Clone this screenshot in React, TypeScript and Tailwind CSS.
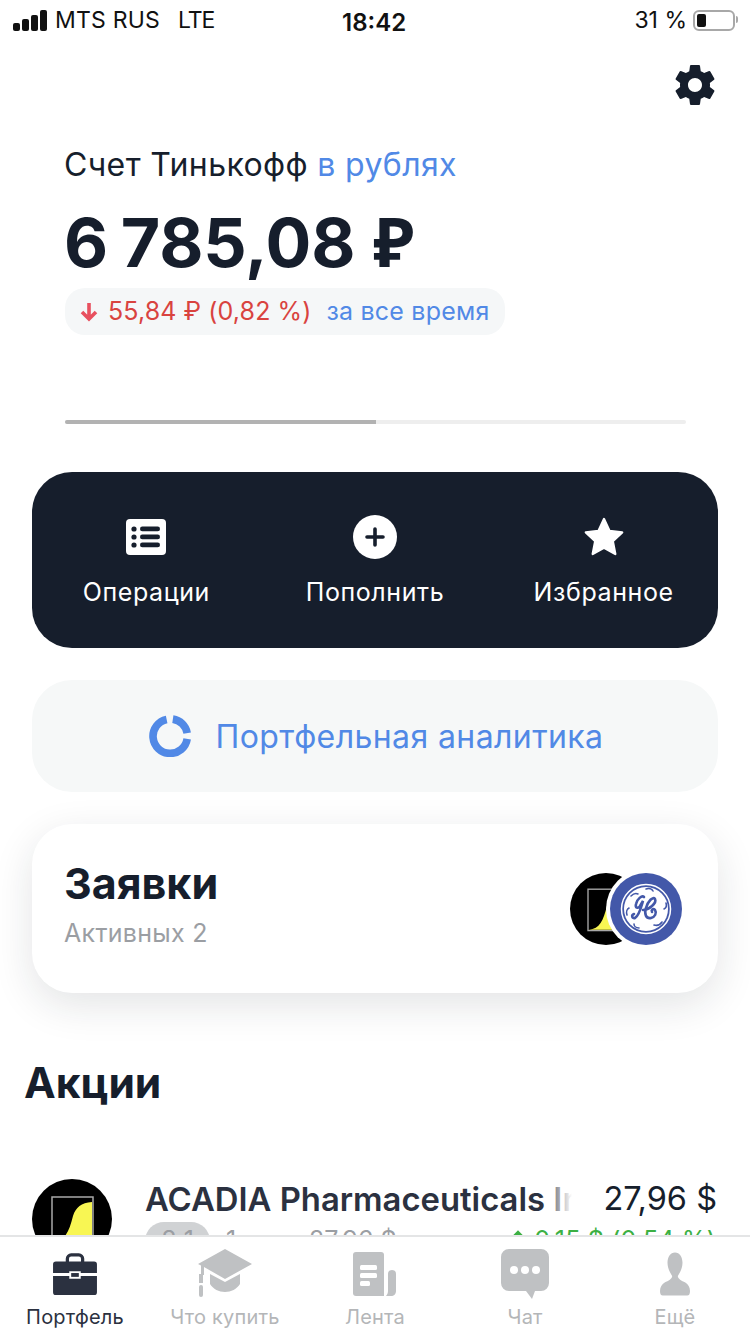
import React from "react";

const font = { fontFamily: "Inter, 'Noto Sans', sans-serif" };

function SignalBars() {
  return (
    <div className="flex items-end gap-[2px]">
      <span className="block w-[7px] h-[8px] rounded-[2px] bg-[#111]" />
      <span className="block w-[7px] h-[12px] rounded-[2px] bg-[#111]" />
      <span className="block w-[7px] h-[16px] rounded-[2px] bg-[#111]" />
      <span className="block w-[7px] h-[21px] rounded-[2px] bg-[#111]" />
    </div>
  );
}

function StatusBar() {
  return (
    <div className="relative flex h-[40px] items-center justify-between pl-[13px] pr-[15px] text-[#111]">
      <div className="flex items-center gap-[8px] text-[23px] tracking-[0.2px]">
        <SignalBars />
        <span>MTS RUS</span>
        <span className="ml-[10px] tracking-[-1px]">LTE</span>
      </div>
      <span className="absolute left-[342px] top-[5px] text-[24px] font-semibold">18:42</span>
      <div className="flex items-center gap-[6px] text-[23px]">
        <span>31 %</span>
        <div className="relative flex h-[21px] w-[42px] items-center rounded-[6px] border-[2px] border-[#a8a8a8] pl-[2px]">
          <span className="block h-[13px] w-[9px] rounded-[2px] bg-[#111]" />
          <span className="absolute right-[-5px] top-[4px] h-[7px] w-[2px] rounded-r bg-[#a8a8a8]" />
        </div>
      </div>
    </div>
  );
}

function Gear() {
  return (
    <svg width="48" height="48" viewBox="0 0 24 24" fill="#161e2c">
      <path d="M19.43 12.98c.04-.32.07-.64.07-.98s-.03-.66-.07-.98l2.11-1.65c.19-.15.24-.42.12-.64l-2-3.46c-.12-.22-.39-.3-.61-.22l-2.49 1c-.52-.4-1.08-.73-1.69-.98l-.38-2.65C14.46 2.18 14.25 2 14 2h-4c-.25 0-.46.18-.49.42l-.38 2.65c-.61.25-1.17.59-1.69.98l-2.49-1c-.23-.09-.49 0-.61.22l-2 3.46c-.13.22-.07.49.12.64l2.11 1.65c-.04.32-.07.65-.07.98s.03.66.07.98l-2.11 1.65c-.19.15-.24.42-.12.64l2 3.46c.12.22.39.3.61.22l2.49-1c.52.4 1.08.73 1.69.98l.38 2.65c.03.24.24.42.49.42h4c.25 0 .46-.18.49-.42l.38-2.65c.61-.25 1.17-.59 1.69-.98l2.49 1c.23.09.49 0 .61-.22l2-3.46c.12-.22.07-.49-.12-.64l-2.11-1.65zM12 15.5c-1.93 0-3.5-1.57-3.5-3.5s1.57-3.5 3.5-3.5 3.5 1.57 3.5 3.5-1.57 3.5-3.5 3.5z" />
    </svg>
  );
}

function ListIcon() {
  return (
    <svg width="40" height="36" viewBox="0 0 40 36">
      <rect width="40" height="36" rx="4" fill="#fff" />
      <g fill="#161e2c">
        <circle cx="8" cy="10" r="2.6" />
        <circle cx="8" cy="18" r="2.6" />
        <circle cx="8" cy="26" r="2.6" />
        <rect x="14" y="7.6" width="20" height="4.6" rx="2.3" />
        <rect x="14" y="15.6" width="20" height="4.6" rx="2.3" />
        <rect x="14" y="23.6" width="20" height="4.6" rx="2.3" />
      </g>
    </svg>
  );
}

function PlusIcon() {
  return (
    <svg width="44" height="44" viewBox="0 0 44 44">
      <circle cx="22" cy="22" r="22" fill="#fff" />
      <path d="M22 14v16M14 22h16" stroke="#161e2c" strokeWidth="3.6" strokeLinecap="round" />
    </svg>
  );
}

function StarIcon() {
  return (
    <svg width="46" height="46" viewBox="0 0 24 24" fill="#fff" stroke="#fff" strokeWidth="1.2" strokeLinejoin="round">
      <path d="M12 2.6l2.9 6.2 6.6.8-4.9 4.6 1.3 6.7L12 17.6l-5.9 3.3 1.3-6.7-4.9-4.6 6.6-.8z" />
    </svg>
  );
}

function ActionButton({ icon, label }: { icon: React.ReactNode; label: string }) {
  return (
    <div className="flex flex-1 flex-col items-center">
      <div className="flex h-[44px] items-center">{icon}</div>
      <span className="mt-[18px] text-[25px] leading-[30px] tracking-[0.6px] text-white">{label}</span>
    </div>
  );
}

function DonutIcon() {
  return (
    <svg width="42" height="42" viewBox="0 0 44 44" fill="none" stroke="#5189e6" strokeWidth="8">
      <path d="M18.5 4.6A18 18 0 1 0 40 25" />
      <path d="M25 4.3A18 18 0 0 1 40 19" />
    </svg>
  );
}

function AcadiaLogo({ size }: { size: number }) {
  return (
    <svg width={size} height={size} viewBox="0 0 80 80" className="shrink-0">
      <circle cx="40" cy="40" r="40" fill="#000" />
      <rect x="20" y="18" width="41" height="46" fill="none" stroke="#a9a9a9" strokeWidth="1.5" />
      <path d="M21 63c12-1 16-10 20-26 3-9 8-13 19-14v40z" fill="#f8f653" />
    </svg>
  );
}

function GeLogo() {
  return (
    <svg width="72" height="72" viewBox="0 0 72 72">
      <circle cx="36" cy="36" r="36" fill="#4358a9" />
      <circle cx="36" cy="36" r="24.5" fill="none" stroke="#fff" strokeWidth="1.5" />
      <circle cx="36" cy="36" r="22" fill="#fff" />
      <g fill="none" stroke="#4358a9" strokeLinecap="round">
        <path strokeWidth="2.6" d="M34 24c-2-2-7 2-8 7-1 4 2 5 4 2l3-5c-2 7-4 15-8 17-3 1-4-3-1-4" />
        <path strokeWidth="2.6" d="M33 37c6 0 14-7 12-11-2-3-7 2-9 9-2 6 0 11 5 10 4-1 6-5 4-8-2-2-4 0-3 2" />
        <path strokeWidth="1.6" d="M36 16c3-1 6 0 7 2M56 30c1 3 0 5-2 6M52 49c-2 3-5 4-8 3M29 55c-3 0-5-2-5-4M17 42c-1-3 0-6 2-7M21 23c2-2 5-3 7-2" />
      </g>
    </svg>
  );
}

function BriefcaseIcon({ color }: { color: string }) {
  return (
    <svg width="44" height="42" viewBox="0 0 46 44">
      <path d="M15 10V6a4 4 0 0 1 4-4h8a4 4 0 0 1 4 4v4" fill="none" stroke={color} strokeWidth="3.4" />
      <path d="M3 9h40a3 3 0 0 1 3 3v9H29v-2H17v2H0v-9a3 3 0 0 1 3-3z" fill={color} />
      <path d="M0 24h17v3h12v-3h17v17a3 3 0 0 1-3 3H3a3 3 0 0 1-3-3z" fill={color} />
      <rect x="19" y="21" width="8" height="4" fill={color} />
    </svg>
  );
}

function CapIcon({ color }: { color: string }) {
  return (
    <svg width="54" height="50" viewBox="0 0 54 50" fill={color}>
      <path d="M27 0l27 15-27 15L6 18v8H3v-9.500L0 15z" />
      <path d="M12 25l15 8 15-8v10c-3 5-9 8-15 8s-12-3-15-8z" />
      <rect x="1" y="36" width="4" height="12" rx="2" />
      <rect x="1" y="25" width="4" height="9" />
    </svg>
  );
}

function FeedIcon({ color }: { color: string }) {
  return (
    <svg width="44" height="44" viewBox="0 0 44 44">
      <path d="M3 0h25a3 3 0 0 1 3 3v41H3a3 3 0 0 1-3-3V3a3 3 0 0 1 3-3z" fill={color} />
      <path d="M33 44h5c3 0 5-2 5-5V22a4 4 0 0 0-8 0v17c0 2-1 4-2 5z" fill={color} />
      <rect x="7" y="13" width="17" height="5" rx="1.500" fill="#fff" />
      <rect x="7" y="21" width="17" height="5" rx="1.500" fill="#fff" />
      <rect x="7" y="29" width="10" height="5" rx="1.500" fill="#fff" />
    </svg>
  );
}

function ChatIcon({ color }: { color: string }) {
  return (
    <svg width="48" height="50" viewBox="0 0 48 50">
      <path d="M8 0h32a8 8 0 0 1 8 8v26a8 8 0 0 1-8 8h-6l-3 8-6-8H8a8 8 0 0 1-8-8V8a8 8 0 0 1 8-8z" fill={color} />
      <circle cx="13" cy="21" r="4" fill="#fff" />
      <circle cx="24" cy="21" r="4" fill="#fff" />
      <circle cx="35" cy="21" r="4" fill="#fff" />
    </svg>
  );
}

function PersonIcon({ color }: { color: string }) {
  return (
    <svg width="30" height="44" viewBox="0 0 32 46" fill={color}>
      <path d="M16 0c5 0 8 5 8 11 0 6-3 11-5 14 0 3 4 5 8 7 3 2 5 5 5 9 0 3-1 5-3 5H3c-2 0-3-2-3-5 0-4 2-7 5-9 4-2 8-4 8-7-2-3-5-8-5-14C8 5 11 0 16 0z" />
    </svg>
  );
}

function TabItem({ icon, label, active }: { icon: React.ReactNode; label: string; active?: boolean }) {
  return (
    <div className="flex flex-1 flex-col items-center">
      <div className="flex h-[52px] items-center">{icon}</div>
      <span className={`mt-[5px] text-[20px] leading-[24px] tracking-[0.2px] ${active ? "text-[#2b3140]" : "text-[#b4b6b8]"}`}>
        {label}
      </span>
    </div>
  );
}

export default function App() {
  const inactive = "#bfc1c3";
  return (
    <div className="flex h-[1334px] w-[750px] flex-col overflow-hidden bg-white" style={font}>
      <StatusBar />
      <div className="min-h-0 flex-1 overflow-hidden">
        <div className="flex justify-end pr-[31px] pt-[21px]">
          <Gear />
        </div>

        <div className="px-[65px]">
          <div className="-ml-[1px] mt-[36px] text-[32px] leading-[40px] tracking-[0.38px] text-[#161e2c]">
            Счет Тинькофф <span className="text-[#5189e6]">в рублях</span>
          </div>
          <div className="-ml-[1px] mt-[16px] text-[68px] font-bold leading-[80px] tracking-[-0.2px] text-[#161e2c] [word-spacing:-3px]">
            6 785,08 <span className="ml-[5px] font-['Noto_Sans'] text-[68px]">₽</span>
          </div>
          <div className="mt-[6px] inline-flex h-[47px] items-center rounded-[20px] bg-[#f5f7f8] pl-[15px] pr-[16px] text-[25px]">
            <svg width="18" height="20" viewBox="0 0 18 20" fill="none" stroke="#e8505f" strokeWidth="3.600">
              <path d="M9 1v16M2 10l7 7 7-7" />
            </svg>
            <span className="ml-[10px] tracking-[0.1px] text-[#d9433f]">55,84 ₽ (0,82 %)</span>
            <span className="ml-[15px] tracking-[0.2px] text-[#5189e6]">за все время</span>
          </div>
          <div className="mt-[85px] flex h-[4px] w-[621px] overflow-hidden rounded-full bg-[#eeeeee]">
            <div className="w-1/2 bg-[#b2b2b2]" />
          </div>
        </div>

        <div className="mx-[32px] mt-[48px] flex h-[176px] flex-col justify-start rounded-[40px] bg-[#161e2c] pt-[43px]">
          <div className="flex">
            <ActionButton icon={<ListIcon />} label="Операции" />
            <ActionButton icon={<PlusIcon />} label="Пополнить" />
            <ActionButton icon={<StarIcon />} label="Избранное" />
          </div>
        </div>

        <div className="mx-[32px] mt-[32px] flex h-[112px] items-center justify-center gap-[25px] rounded-[40px] bg-[#f6f8f8] pl-[2px]">
          <DonutIcon />
          <span className="pt-[2px] text-[32px] tracking-[0.4px] text-[#5189e6]">Портфельная аналитика</span>
        </div>

        <div className="mx-[32px] mt-[32px] flex h-[169px] items-center justify-between rounded-[40px] bg-white pl-[32px] pr-[32px] shadow-[0_12px_40px_rgba(22,30,44,0.12)]">
          <div className="-mt-[11px]">
            <div className="text-[43px] font-bold leading-[50px] text-[#161e2c]">Заявки</div>
            <div className="mt-[10px] text-[25px] leading-[30px] tracking-[0.3px] text-[#9b9ea3]">Активных 2</div>
          </div>
          <div className="flex items-center">
            <AcadiaLogo size={72} />
            <div className="z-10 ml-[-36px] rounded-full bg-white p-[4px]">
              <GeLogo />
            </div>
          </div>
        </div>

        <div className="ml-[24px] mt-[64px] text-[42.5px] font-bold leading-[52px] text-[#161e2c]">Акции</div>

        <div className="mt-[70px] flex px-[32px]">
          <AcadiaLogo size={80} />
          <div className="ml-[33px] flex min-w-0 flex-1 flex-col">
            <div className="flex items-center justify-between pr-[1px]">
              <div className="relative w-[427px] overflow-hidden whitespace-nowrap text-[32.8px] font-semibold leading-[40px] text-[#2b3140]">
                ACADIA Pharmaceuticals Inc
                <span className="absolute bottom-0 right-0 top-0 w-[30px] bg-gradient-to-r from-transparent to-white" />
              </div>
              <span className="text-[32.5px] leading-[40px] text-[#161e2c]">27,96 $</span>
            </div>
            <div className="mt-[3px] flex items-center justify-between pr-[2px] text-[25px]">
              <div className="flex items-center">
                <span className="w-[65px] rounded-full bg-[#d0d2d4] text-center text-[#9b9ea3]">8 1</span>
                <span className="ml-[16px] text-[#9b9ea3]">1 шт.</span>
                <span className="ml-[28px] text-[#9b9ea3]">27,96 $</span>
              </div>
              <span className="flex items-center gap-[9px] tracking-[0.2px] text-[#3cb043]">
                <svg width="14" height="16" viewBox="0 0 18 20" fill="none" stroke="#3cb043" strokeWidth="4" className="-mt-[6px]">
                  <path d="M9 19V3M2 10l7-7 7 7" />
                </svg>
                0,15 $ (0,54 %)
              </span>
            </div>
          </div>
        </div>
      </div>

      <div className="relative z-10 flex h-[99px] shrink-0 border-t-2 border-[#e4e5e6] bg-white pt-[11px]">
        <TabItem icon={<BriefcaseIcon color="#2b3140" />} label="Портфель" active />
        <TabItem icon={<CapIcon color={inactive} />} label="Что купить" />
        <TabItem icon={<FeedIcon color={inactive} />} label="Лента" />
        <TabItem icon={<ChatIcon color={inactive} />} label="Чат" />
        <TabItem icon={<PersonIcon color={inactive} />} label="Ещё" />
      </div>
    </div>
  );
}
